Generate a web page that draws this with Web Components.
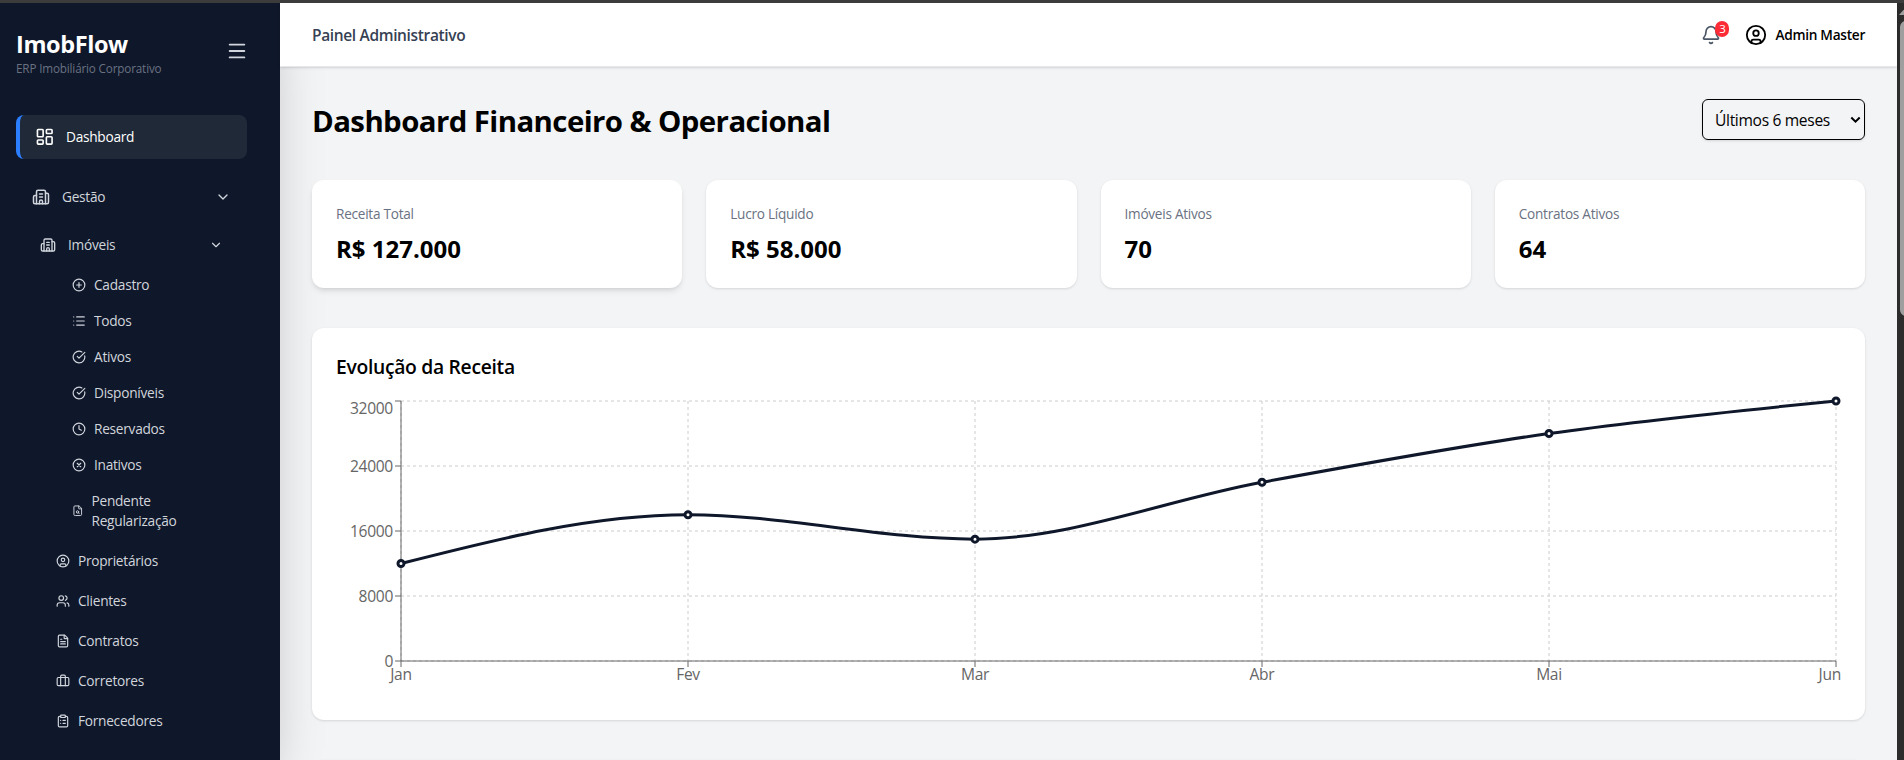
<!DOCTYPE html>
<html lang="pt-BR">
<head>
<meta charset="utf-8">
<title>ImobFlow</title>
<style>
    html, body {
        margin: 0;
        height: 100%;
        overflow: hidden;
    }
    body {
        font-family: "Open Sans", "Noto Sans", sans-serif;
        color: #000;
    }
</style>
</head>
<body>
<im-app>
    <im-sidebar slot="sidebar">
        <im-nav-item kind="root" icon="dashboard" active>Dashboard</im-nav-item>
        <im-nav-item kind="group" icon="building" expandable>Gestão</im-nav-item>
        <im-nav-item kind="subgroup" icon="building" expandable>Imóveis</im-nav-item>
        <im-nav-item kind="leaf" icon="plus">Cadastro</im-nav-item>
        <im-nav-item kind="leaf" icon="list">Todos</im-nav-item>
        <im-nav-item kind="leaf" icon="check">Ativos</im-nav-item>
        <im-nav-item kind="leaf" icon="check">Disponíveis</im-nav-item>
        <im-nav-item kind="leaf" icon="clock">Reservados</im-nav-item>
        <im-nav-item kind="leaf" icon="x">Inativos</im-nav-item>
        <im-nav-item kind="leaf" icon="filesearch" tall>Pendente<br>Regularização</im-nav-item>
        <im-nav-item kind="entry" icon="user">Proprietários</im-nav-item>
        <im-nav-item kind="entry" icon="users">Clientes</im-nav-item>
        <im-nav-item kind="entry" icon="file">Contratos</im-nav-item>
        <im-nav-item kind="entry" icon="briefcase">Corretores</im-nav-item>
        <im-nav-item kind="entry" icon="clipboard">Fornecedores</im-nav-item>
    </im-sidebar>
    <im-topbar slot="topbar" user="Admin Master" alerts="3">Painel Administrativo</im-topbar>
    <im-page-head>
        Dashboard Financeiro &amp; Operacional
        <im-select slot="action">Últimos 6 meses</im-select>
    </im-page-head>
    <im-grid>
        <im-stat label="Receita Total" raised>R$ 127.000</im-stat>
        <im-stat label="Lucro Líquido">R$ 58.000</im-stat>
        <im-stat label="Imóveis Ativos">70</im-stat>
        <im-stat label="Contratos Ativos">64</im-stat>
    </im-grid>
    <im-panel>
        <span slot="title">Evolução da Receita</span>
        <im-line-chart max="32000" step="8000" labels="Jan,Fev,Mar,Abr,Mai,Jun" values="12000,18000,15000,22000,28000,32000"></im-line-chart>
    </im-panel>
    <im-panel></im-panel>
</im-app>

<script>
const ICONS = {
    dashboard: '<rect width="7" height="9" x="3" y="3" rx="1"/><rect width="7" height="5" x="14" y="3" rx="1"/><rect width="7" height="9" x="14" y="12" rx="1"/><rect width="7" height="5" x="3" y="16" rx="1"/>',
    building: '<path d="M10 12h4M10 8h4M14 21v-3a2 2 0 0 0-4 0v3"/><path d="M6 10H4a2 2 0 0 0-2 2v7a2 2 0 0 0 2 2h16a2 2 0 0 0 2-2V9a2 2 0 0 0-2-2h-2"/><path d="M6 21V5a2 2 0 0 1 2-2h8a2 2 0 0 1 2 2v16"/>',
    chevron: '<path d="m6 9 6 6 6-6"/>',
    menu: '<path d="M4 5h16M4 12h16M4 19h16"/>',
    plus: '<circle cx="12" cy="12" r="10"/><path d="M8 12h8M12 8v8"/>',
    list: '<path d="M3 5h.01M3 12h.01M3 19h.01M8 5h13M8 12h13M8 19h13"/>',
    check: '<path d="M21.801 10A10 10 0 1 1 17 3.335"/><path d="m9 11 3 3L22 4"/>',
    clock: '<circle cx="12" cy="12" r="10"/><path d="M12 6v6l4 2"/>',
    x: '<circle cx="12" cy="12" r="10"/><path d="m15 9-6 6M9 9l6 6"/>',
    filesearch: '<path d="M6 22a2 2 0 0 1-2-2V4a2 2 0 0 1 2-2h8a2.4 2.4 0 0 1 1.704.706l3.588 3.588A2.4 2.4 0 0 1 20 8v12a2 2 0 0 1-2 2z"/><path d="M14 2v5a1 1 0 0 0 1 1h5"/><circle cx="11.5" cy="14.5" r="2.5"/><path d="M13.3 16.3 15 18"/>',
    user: '<circle cx="12" cy="12" r="10"/><circle cx="12" cy="10" r="3"/><path d="M7 20.662V19a2 2 0 0 1 2-2h6a2 2 0 0 1 2 2v1.662"/>',
    users: '<path d="M16 21v-2a4 4 0 0 0-4-4H6a4 4 0 0 0-4 4v2"/><path d="M16 3.128a4 4 0 0 1 0 7.744"/><path d="M22 21v-2a4 4 0 0 0-3-3.87"/><circle cx="9" cy="7" r="4"/>',
    file: '<path d="M6 22a2 2 0 0 1-2-2V4a2 2 0 0 1 2-2h8a2.4 2.4 0 0 1 1.704.706l3.588 3.588A2.4 2.4 0 0 1 20 8v12a2 2 0 0 1-2 2z"/><path d="M14 2v5a1 1 0 0 0 1 1h5M10 9H8M16 13H8M16 17H8"/>',
    briefcase: '<path d="M16 20V4a2 2 0 0 0-2-2h-4a2 2 0 0 0-2 2v16"/><rect width="20" height="14" x="2" y="6" rx="2"/>',
    clipboard: '<rect width="8" height="4" x="8" y="2" rx="1"/><path d="M16 4h2a2 2 0 0 1 2 2v14a2 2 0 0 1-2 2H6a2 2 0 0 1-2-2V6a2 2 0 0 1 2-2h2M12 11h4M12 16h4M8 11h.01M8 16h.01"/>',
    bell: '<path d="M10.268 21a2 2 0 0 0 3.464 0"/><path d="M3.262 15.326A1 1 0 0 0 4 17h16a1 1 0 0 0 .74-1.673C19.41 13.956 18 12.499 18 8A6 6 0 0 0 6 8c0 4.499-1.411 5.956-2.738 7.326"/>'
};

class Icon extends HTMLElement {
    constructor() {
        super();
        this.attachShadow({mode: 'open'});
    }

    connectedCallback() {
        const size = this.getAttribute('size') || 16;
        const stroke = this.getAttribute('stroke') || 2;
        this.shadowRoot.innerHTML = `
        <style>
            :host { display: block; flex: none; width: ${size}px; height: ${size}px; }
            svg { display: block; }
        </style>
        <svg width="${size}" height="${size}" viewBox="0 0 24 24" fill="none" stroke="currentColor" stroke-width="${stroke}" stroke-linecap="round" stroke-linejoin="round">${ICONS[this.getAttribute('name')]}</svg>`;
    }
}
customElements.define('im-icon', Icon);

class App extends HTMLElement {
    constructor() {
        super();
        this.attachShadow({mode: 'open'});
        this.shadowRoot.innerHTML = `
        <style>
            :host {
                display: flex;
                box-sizing: border-box;
                height: 100vh;
                border-top: 3px solid #3c3c3c;
                background: #f3f4f6;
                overflow: hidden;
            }
            #column {
                flex: 1;
                min-width: 0;
                display: flex;
                flex-direction: column;
            }
            main {
                flex: 1;
                min-height: 0;
                padding: 32px 32px 0;
                display: flex;
                flex-direction: column;
                gap: 40px;
                overflow: hidden;
            }
            #track {
                width: 7px;
                background: #2c2c2c;
                overflow: hidden;
            }
            #arrow {
                width: 0;
                height: 0;
                margin: 5px 0 0 2px;
                border: 6px solid transparent;
                border-top: 0;
                border-bottom: 7px solid #9f9f9f;
            }
            #thumb {
                width: 12px;
                height: 295px;
                margin: 6px 0 0 3px;
                border-radius: 6px;
                background: #9f9f9f;
            }
        </style>
        <slot name="sidebar"></slot>
        <div id="column">
            <slot name="topbar"></slot>
            <main><slot></slot></main>
        </div>
        <div id="track"><div id="arrow"></div><div id="thumb"></div></div>`;
    }
}
customElements.define('im-app', App);

class Sidebar extends HTMLElement {
    constructor() {
        super();
        this.attachShadow({mode: 'open'});
        this.shadowRoot.innerHTML = `
        <style>
            :host {
                display: block;
                box-sizing: border-box;
                width: 280px;
                flex: none;
                padding: 24px 33px 0 16px;
                background: #0f172a;
                color: #d1d5dc;
                box-shadow: 0 25px 50px -12px rgba(0,0,0,0.25);
            }
            header {
                display: flex;
                justify-content: space-between;
                height: 88px;
            }
            h1 {
                margin: 0;
                padding-top: 1px;
                font-size: 23.5px;
                line-height: 32px;
                font-weight: 700;
                letter-spacing: -0.4px;
                color: #fff;
            }
            p {
                margin: 0;
                font-size: 11.7px;
                line-height: 16px;
                letter-spacing: -0.16px;
                color: #6a7282;
            }
            im-icon {
                margin: 13px -1px 0 0;
            }
        </style>
        <header>
            <div>
                <h1>ImobFlow</h1>
                <p>ERP Imobiliário Corporativo</p>
            </div>
            <im-icon name="menu" size="22"></im-icon>
        </header>
        <nav><slot></slot></nav>`;
    }
}
customElements.define('im-sidebar', Sidebar);

// icon size and chevron size per nesting level
const LEVELS = {
    root: [19.5, 0],
    group: [18, 16],
    subgroup: [16, 14],
    leaf: [14, 0],
    entry: [14, 0]
};

class NavItem extends HTMLElement {
    constructor() {
        super();
        this.attachShadow({mode: 'open'});
    }

    connectedCallback() {
        const [size, chevron] = LEVELS[this.getAttribute('kind')];
        const iconSize = this.hasAttribute('tall') ? 11.5 : size;
        this.shadowRoot.innerHTML = `
        <style>
            :host {
                display: flex;
                align-items: center;
                box-sizing: border-box;
                height: 40px;
                font-size: 13.7px;
                line-height: 20px;
                letter-spacing: -0.27px;
            }
            #label { flex: 1; }
            :host([kind=root]) {
                height: 44px;
                padding-left: 15.3px;
                gap: 11.2px;
                border-left: 4px solid #2b7fff;
                border-radius: 8px;
                background: #1f2937;
                color: #fff;
            }
            :host([kind=group]) {
                height: 44px;
                margin-top: 16px;
                padding: 0 16px;
                gap: 12px;
            }
            :host([kind=subgroup]) {
                margin: 6px 0 2px;
                padding: 0 24px;
                gap: 12px;
            }
            :host([kind=leaf]) {
                height: 36px;
                padding-left: 56px;
                gap: 8px;
            }
            :host([tall]) {
                height: 58px;
                padding-bottom: 2px;
            }
            :host([kind=entry]) {
                padding-left: 40px;
                gap: 8px;
            }
        </style>
        <im-icon name="${this.getAttribute('icon')}" size="${iconSize}"></im-icon>
        <span id="label"><slot></slot></span>
        ${this.hasAttribute('expandable') ? `<im-icon name="chevron" size="${chevron}"></im-icon>` : ''}`;
    }
}
customElements.define('im-nav-item', NavItem);

class Topbar extends HTMLElement {
    constructor() {
        super();
        this.attachShadow({mode: 'open'});
    }

    connectedCallback() {
        this.shadowRoot.innerHTML = `
        <style>
            :host {
                display: flex;
                align-items: center;
                box-sizing: border-box;
                flex: none;
                height: 64px;
                padding: 0 32px;
                border-bottom: 1px solid #e5e7eb;
                background: #fff;
                box-shadow: 0 1px 3px rgba(0,0,0,0.1), 0 1px 2px -1px rgba(0,0,0,0.1);
                position: relative;
            }
            h2 {
                flex: 1;
                margin: 0;
                font-size: 15.5px;
                font-weight: 600;
                letter-spacing: -0.35px;
                color: #364153;
            }
            #bell {
                position: relative;
                margin-right: 24px;
                color: #4a5565;
            }
            #count {
                position: absolute;
                left: 14px;
                top: -4px;
                width: 14px;
                height: 16px;
                border-radius: 8px;
                background: #fb2c36;
                color: #fff;
                font-size: 11.5px;
                line-height: 16px;
                text-align: center;
            }
            #user {
                display: flex;
                align-items: center;
                gap: 8px;
                font-size: 13.7px;
                font-weight: 600;
                letter-spacing: -0.3px;
            }
        </style>
        <h2><slot></slot></h2>
        <div id="bell"><im-icon name="bell" size="20"></im-icon><span id="count">${this.getAttribute('alerts')}</span></div>
        <div id="user"><im-icon name="user" size="22"></im-icon><span>${this.getAttribute('user')}</span></div>`;
    }
}
customElements.define('im-topbar', Topbar);

class PageHead extends HTMLElement {
    constructor() {
        super();
        this.attachShadow({mode: 'open'});
        this.shadowRoot.innerHTML = `
        <style>
            :host {
                display: flex;
                align-items: center;
                justify-content: space-between;
                flex: none;
                height: 41px;
            }
            h1 {
                margin: 0;
                padding-top: 2px;
                font-size: 29.4px;
                line-height: 36px;
                font-weight: 700;
                letter-spacing: -0.58px;
            }
        </style>
        <h1><slot></slot></h1>
        <slot name="action"></slot>`;
    }
}
customElements.define('im-page-head', PageHead);

class Select extends HTMLElement {
    constructor() {
        super();
        this.attachShadow({mode: 'open'});
        this.shadowRoot.innerHTML = `
        <style>
            :host {
                display: flex;
                align-items: center;
                justify-content: space-between;
                box-sizing: border-box;
                width: 163px;
                height: 41px;
                padding: 0 3px 0 12px;
                border: 1px solid #000;
                border-radius: 6px;
                box-shadow: 0 1px 3px rgba(0,0,0,0.1), 0 1px 2px -1px rgba(0,0,0,0.1);
                font-size: 15.6px;
                letter-spacing: -0.33px;
            }
        </style>
        <span><slot></slot></span>
        <svg width="11" height="8" viewBox="0 0 11 8" fill="none" stroke="#000" stroke-width="2"><path d="M1.3 1.5 5.5 5.7 9.7 1.5"/></svg>`;
    }
}
customElements.define('im-select', Select);

class Grid extends HTMLElement {
    constructor() {
        super();
        this.attachShadow({mode: 'open'});
        this.shadowRoot.innerHTML = `
        <style>
            :host {
                display: grid;
                grid-template-columns: repeat(4, 1fr);
                gap: 24px;
                flex: none;
            }
        </style>
        <slot></slot>`;
    }
}
customElements.define('im-grid', Grid);

class Stat extends HTMLElement {
    constructor() {
        super();
        this.attachShadow({mode: 'open'});
    }

    connectedCallback() {
        this.shadowRoot.innerHTML = `
        <style>
            :host {
                display: flex;
                flex-direction: column;
                gap: 9px;
                padding: 24px 24px 23px;
                border-radius: 12px;
                background: #fff;
                box-shadow: 0 1px 3px rgba(0,0,0,0.1), 0 1px 2px -1px rgba(0,0,0,0.1);
            }
            :host([raised]) {
                box-shadow: 0 4px 6px -1px rgba(0,0,0,0.1), 0 2px 4px -2px rgba(0,0,0,0.1);
            }
            #label {
                font-size: 13.6px;
                line-height: 20px;
                letter-spacing: -0.25px;
                color: #6a7282;
            }
            #value {
                font-size: 24px;
                line-height: 32px;
                font-weight: 700;
            }
        </style>
        <span id="label">${this.getAttribute('label')}</span>
        <span id="value"><slot></slot></span>`;
    }
}
customElements.define('im-stat', Stat);

class Panel extends HTMLElement {
    constructor() {
        super();
        this.attachShadow({mode: 'open'});
        this.shadowRoot.innerHTML = `
        <style>
            :host {
                display: block;
                box-sizing: border-box;
                flex: none;
                height: 392px;
                padding: 24px;
                border-radius: 12px;
                background: #fff;
                box-shadow: 0 1px 3px rgba(0,0,0,0.1), 0 1px 2px -1px rgba(0,0,0,0.1);
            }
            h2 {
                margin: 1px 0 15px;
                font-size: 19.3px;
                line-height: 28px;
                font-weight: 600;
                letter-spacing: -0.3px;
            }
        </style>
        <h2><slot name="title"></slot></h2>
        <slot></slot>`;
    }
}
customElements.define('im-panel', Panel);

class LineChart extends HTMLElement {
    constructor() {
        super();
        this.attachShadow({mode: 'open'});
    }

    connectedCallback() {
        const labels = this.getAttribute('labels').split(',');
        const values = this.getAttribute('values').split(',').map(Number);
        const max = Number(this.getAttribute('max'));
        const step = Number(this.getAttribute('step'));
        const left = 65, right = 1500, top = 5, bottom = 265;
        const x = i => left + i * (right - left) / (labels.length - 1);
        const y = v => bottom - v / max * (bottom - top);
        const points = values.map((v, i) => [x(i), y(v)]);

        let grid = '', axis = '', text = '';
        for (let v = 0; v <= max; v += step) {
            // the top label is kept inside the drawing
            const base = y(v) + (v === max ? 13 : 6);
            grid += `<path d="M${left} ${y(v)}H${right}"/>`;
            axis += `<path d="M${left - 6} ${y(v)}h6"/>`;
            text += `<text x="${left - 8}" y="${base}" text-anchor="end">${v}</text>`;
        }
        labels.forEach((label, i) => {
            const last = i === labels.length - 1;
            grid += `<path d="M${x(i)} ${top}V${bottom}"/>`;
            axis += `<path d="M${x(i)} ${bottom}v6"/>`;
            text += `<text x="${last ? 1505 : x(i)}" y="284" text-anchor="${last ? 'end' : 'middle'}">${label}</text>`;
        });

        this.shadowRoot.innerHTML = `
        <style>
            :host { display: block; height: 300px; }
            svg { display: block; overflow: visible; }
            text { font-size: 15.6px; letter-spacing: -0.3px; fill: #666; }
        </style>
        <svg width="1505" height="300" fill="none">
            <g stroke="#ccc" stroke-dasharray="3 3">${grid}</g>
            <g stroke="#666">${axis}<path d="M${left} ${top}V${bottom}H${right}"/></g>
            <g>${text}</g>
            <path d="${this._curve(points)}" stroke="#0f172a" stroke-width="3"/>
            <g fill="#fff" stroke="#0f172a" stroke-width="3">${points.map(p => `<circle cx="${p[0]}" cy="${p[1]}" r="3"/>`).join('')}</g>
        </svg>`;
    }

    // monotone cubic through the points
    _curve(p) {
        const n = p.length;
        const s = [];
        for (let i = 0; i < n - 1; i++) {
            s.push((p[i + 1][1] - p[i][1]) / (p[i + 1][0] - p[i][0]));
        }
        const t = [];
        for (let i = 1; i < n - 1; i++) {
            const a = s[i - 1], b = s[i];
            t[i] = (Math.sign(a) + Math.sign(b)) * Math.min(Math.abs(a), Math.abs(b), 0.5 * Math.abs((a + b) / 2));
        }
        t[0] = (3 * s[0] - t[1]) / 2;
        t[n - 1] = (3 * s[n - 2] - t[n - 2]) / 2;
        let d = `M${p[0]}`;
        for (let i = 0; i < n - 1; i++) {
            const h = (p[i + 1][0] - p[i][0]) / 3;
            d += `C${p[i][0] + h},${p[i][1] + h * t[i]},${p[i + 1][0] - h},${p[i + 1][1] - h * t[i + 1]},${p[i + 1]}`;
        }
        return d;
    }
}
customElements.define('im-line-chart', LineChart);
</script>
</body>
</html>
